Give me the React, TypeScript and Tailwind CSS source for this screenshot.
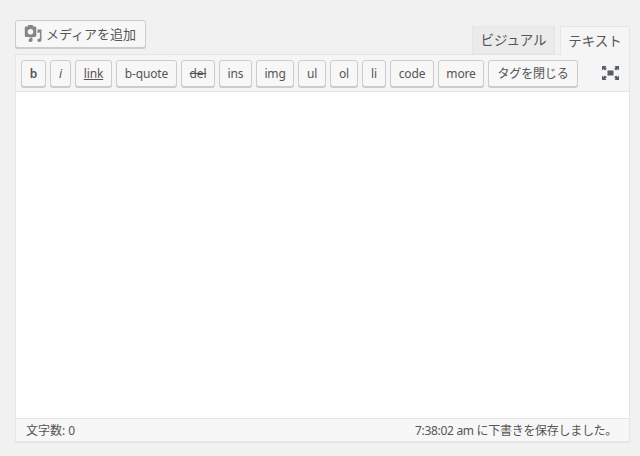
import React from 'react';

const quicktags = [
  { label: 'b', width: 'w-[25px]', extra: 'font-semibold' },
  { label: 'i', width: 'w-[21px]', extra: 'italic' },
  { label: 'link', width: 'w-[37px]', extra: 'underline' },
  { label: 'b-quote', width: 'w-[61px]', extra: '' },
  { label: 'del', width: 'w-[34px]', extra: 'line-through' },
  { label: 'ins', width: 'w-[33px]', extra: '' },
  { label: 'img', width: 'w-[38px]', extra: '' },
  { label: 'ul', width: 'w-[28px]', extra: '' },
  { label: 'ol', width: 'w-[28px]', extra: '' },
  { label: 'li', width: 'w-[24px]', extra: '' },
  { label: 'code', width: 'w-[44px]', extra: '' },
  { label: 'more', width: 'w-[46px]', extra: '' },
  { label: 'タグを閉じる', width: 'w-[90px] text-[12.5px]', extra: '' },
];

const MediaIcon = () => (
  <svg width="18" height="18" viewBox="0 0 18 18" className="text-[#82878c]">
    <path
      fill="currentColor"
      fillRule="evenodd"
      d="M2 1.500h1.500L4.500 0h4l1 1.500H11c.8 0 1.300.5 1.300 1.200v8.100c0 .7-.5 1.200-1.300 1.200H2c-.7 0-1.200-.5-1.200-1.200V2.700C.8 2 1.300 1.500 2 1.500zM6.500 4a2.800 2.800 0 1 0 0 5.600 2.800 2.800 0 0 0 0-5.600z"
    />
    <path fill="currentColor" d="M13.500 4.500h4v10.500c0 1.200-1 2-2.100 2s-2-.7-2-1.700.9-1.800 2-1.800c.2 0 .3 0 .5.100V7.500l-2.400.5z" />
    <path fill="currentColor" d="M5 12.500h3.500v2.800c0 1-.9 1.700-2 1.700s-2-.7-2-1.600.8-1.600 1.800-1.600h.2z" />
  </svg>
);

const FullscreenIcon = () => (
  <svg width="17" height="14" viewBox="0 0 17 14" className="text-[#555d66]">
    <path
      fill="currentColor"
      d="M0 0h4.500L3.300 1.200 4.800 2.700 2.900 4.600 1.400 3.100 0 4.500zM17 0v4.500l-1.400-1.400-1.500 1.500-1.900-1.900 1.500-1.500L12.500 0zM0 14V9.500l1.400 1.400 1.500-1.500 1.900 1.900-1.500 1.500L4.500 14zM17 14h-4.500l1.200-1.200-1.500-1.500 1.900-1.900 1.500 1.500L17 9.500z"
    />
    <rect x="5.500" y="4.500" width="6" height="5" fill="currentColor" />
  </svg>
);

export default function App() {
  return (
    <div className="h-[456px] w-[640px] overflow-hidden bg-[#f1f1f1] pl-[15px] pr-[10px] pt-[20px] font-['Noto_Sans','Noto_Sans_CJK_JP',sans-serif] text-[13px] text-[#555]">
      <div className="flex h-[34px] items-start justify-between">
        <button className="flex h-[28px] w-[131px] items-center rounded-[3px] border border-[#ccc] bg-[#f7f7f7] pl-[8px] shadow-[0_1px_0_#ccc]">
          <MediaIcon />
          <span className="ml-[4px] pt-[1px] text-[13px] text-[#555]">メディアを追加</span>
        </button>
        <div className="mt-[6px] flex items-start text-[13.5px]">
          <div className="flex h-[28px] w-[83px] items-center justify-center border border-[#e5e5e5] bg-[#ebebeb] text-[#555]">ビジュアル</div>
          <div className="z-10 ml-[5px] flex h-[29px] w-[70px] items-center justify-center border border-b-0 border-[#e5e5e5] bg-[#f5f5f5] text-[#555]">テキスト</div>
        </div>
      </div>

      <div className="h-[388px] border border-[#e5e5e5] shadow-[0_1px_1px_rgba(0,0,0,0.04)]">
        <div className="flex h-[37px] items-start gap-[4px] border-b border-[#e5e5e5] bg-[#f5f5f5] pl-[5px] pt-[5px]">
          {quicktags.map((tag) => (
            <button
              key={tag.label}
              className={`flex h-[27px] shrink-0 items-center justify-center rounded-[3px] border border-[#ccc] bg-[#f7f7f7] pt-[1px] text-[12px] tracking-[-0.15px] text-[#555] shadow-[0_1px_0_#ccc] ${tag.width} ${tag.extra}`}
            >
              {tag.label}
            </button>
          ))}
          <div className="ml-[20px] mt-[6px] flex">
            <FullscreenIcon />
          </div>
        </div>
        <div className="h-[326px] bg-white" />
        <div className="flex h-[23px] items-center justify-between border-t border-[#e5e5e5] bg-[#f7f7f7] pl-[10px] pr-[12px] pt-[1px] text-[12px] text-[#555]">
          <span>文字数: 0</span>
          <span className="tracking-[-0.3px]">7:38:02 am に下書きを保存しました。</span>
        </div>
      </div>
    </div>
  );
}
